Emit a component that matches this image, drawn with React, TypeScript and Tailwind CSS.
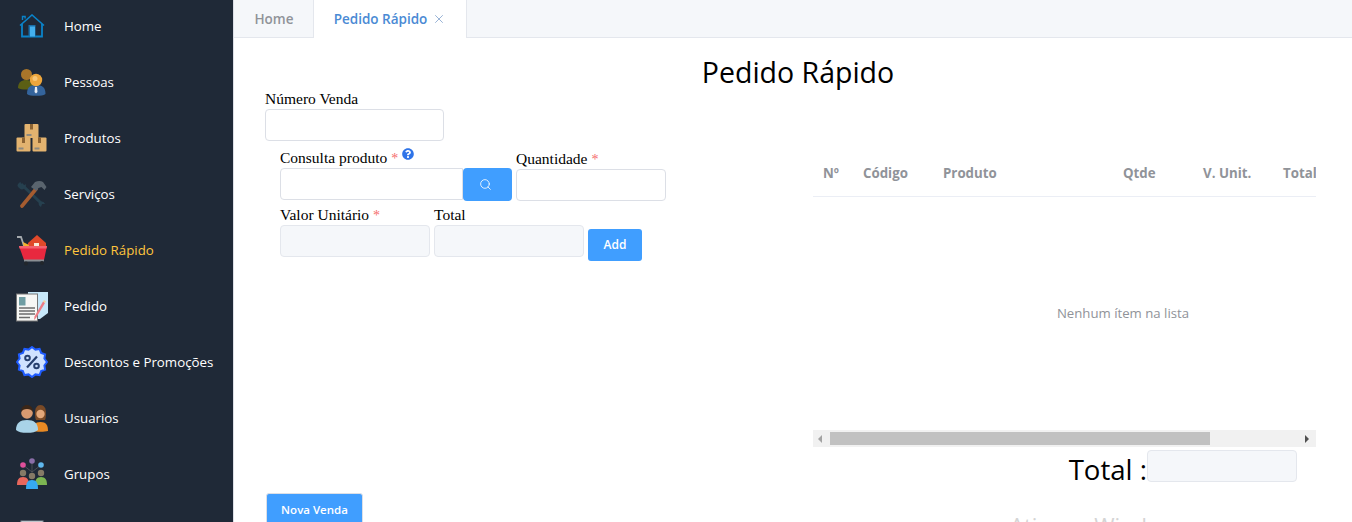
import { Search, X } from "lucide-react";
import { FaQuestionCircle } from "react-icons/fa";
import type { ReactNode } from "react";

function HomeIcon() {
  return (
    <svg width="26" height="24" viewBox="0 0 26 24" fill="none">
      <path d="M1 11.500 13 1l12 10.500" stroke="#0a83c9" strokeWidth="1.600" />
      <path d="M3.500 6V2.500h2.600v2" stroke="#0a83c9" strokeWidth="1.400" />
      <path d="M3 10v12.500h20V10" stroke="#0a83c9" strokeWidth="1.800" />
      <rect x="9.500" y="11" width="7" height="11.500" fill="#1a6fa8" />
      <rect x="11" y="12.500" width="5" height="10" fill="#43b0ee" />
    </svg>
  );
}

function PessoasIcon() {
  return (
    <svg width="28" height="28" viewBox="0 0 28 28">
      <path d="M0 20c0-6 4-8 8-8s8 2 8 8c-2 1-4 1.500-8 1.500S2 21 0 20Z" fill="#5b5f14" />
      <circle cx="8.500" cy="6.500" r="5.500" fill="#a9752a" />
      <path d="M9 26c0-7 3-9 9-9s9.500 2 9.500 9c-2 1.500-5 1.800-9.500 1.800S11 27.500 9 26Z" fill="#34649c" />
      <path d="M17 19h2l.5 5-1.500 1.500-1.500-1.500Z" fill="#e9eef5" />
      <circle cx="18" cy="12" r="6.200" fill="#eda63c" />
      <circle cx="17" cy="10.500" r="2.500" fill="#f7c677" />
    </svg>
  );
}

function BoxIcon({ x, y }: { x: number; y: number }) {
  return (
    <g transform={`translate(${x} ${y})`}>
      <rect width="14" height="14" rx="1" fill="#e3b36f" />
      <rect x="5.500" width="3" height="5.500" fill="#8d6433" />
      <rect x="2" y="10" width="5" height="2" fill="#8e8a80" />
    </g>
  );
}

function ProdutosIcon() {
  return (
    <svg width="32" height="28" viewBox="0 0 32 28">
      <BoxIcon x={8.500} y={0} />
      <BoxIcon x={0.500} y={13.500} />
      <BoxIcon x={16.500} y={13.500} />
    </svg>
  );
}

function ServicosIcon() {
  return (
    <svg width="30" height="28" viewBox="0 0 30 28" fill="none">
      <path d="M4 4 L25 24" stroke="#26404f" strokeWidth="3" />
      <path d="M0.500 6c0-2 1-3 3-4l1 3 2 1 2-2c1 2 0 4-2 5s-4 0-6-3Z" fill="#26404f" />
      <path d="M22 22c2-1 5-1 6 2l-3 0-1 3c-2-1-3-3-2-5Z" fill="#26404f" />
      <path d="M5 26 19 9" stroke="#a55c30" strokeWidth="3.600" strokeLinecap="round" />
      <path d="M14 7l4-5c3-1.500 6-1.500 8 0l3.500 5-2 3-3-3-3 1-2 3Z" fill="#59646e" />
    </svg>
  );
}

function PedidoRapidoIcon() {
  return (
    <svg width="32" height="32" viewBox="0 0 32 32" fill="none">
      <path d="M1 3h4l3 9" stroke="#a4a9ad" strokeWidth="1.800" />
      <path d="M21 1l9 8v6H12V9Z" fill="#e0492a" />
      <path d="M18 9h5v6h-5Z" fill="#f8ead8" />
      <path d="M7 8l6 3-1 4H8Z" fill="#f2b22e" />
      <path d="M3 12h28l-3 14H8Z" fill="#e8283f" />
      <path d="M3 12h28l-.5 2.500H3.500Z" fill="#f4606f" />
      <path d="M8 26.500h20" stroke="#8a8f94" strokeWidth="2" />
      <circle cx="10" cy="29.500" r="2" fill="#22262b" />
      <circle cx="26" cy="29" r="2" fill="#22262b" />
    </svg>
  );
}

function PedidoIcon() {
  return (
    <svg width="32" height="31" viewBox="0 0 32 31">
      <path d="M12 1h20v21l-8 6H12Z" fill="#c7e8fa" />
      <rect x="0.500" y="3" width="21" height="27" fill="#f7f7f5" stroke="#777" />
      <rect x="3" y="6" width="6.500" height="8.500" fill="#6f9da3" />
      <path d="M3 17h16M3 20h16M3 23h16M3 26.500h11" stroke="#6d6d6d" strokeWidth="1.300" />
      <path d="M29 12 20 27l-2 2 .5-3.500L27 10.500Z" fill="#ee7d85" />
      <path d="M27 10.500l2 1.500 1-1.500-2-1.500Z" fill="#f2d39b" />
    </svg>
  );
}

function DescontosIcon() {
  return (
    <svg width="32" height="32" viewBox="0 0 32 32">
      <path
        d="M16 1l3.400 2.600 4.200-.7 1.500 4 4 1.500-.7 4.200L31 16l-2.600 3.400.7 4.200-4 1.500-1.500 4-4.200-.7L16 31l-3.400-2.600-4.200.7-1.500-4-4-1.500.7-4.200L1 16l2.600-3.400-.7-4.200 4-1.500 1.500-4 4.200.7Z"
        fill="#cfe2ff"
        stroke="#1f5cff"
        strokeWidth="2"
      />
      <path d="M21 10.500 11 21.500" stroke="#27406f" strokeWidth="2.200" />
      <circle cx="11.500" cy="12" r="2.300" fill="none" stroke="#27406f" strokeWidth="2" />
      <circle cx="20.500" cy="20" r="2.300" fill="none" stroke="#27406f" strokeWidth="2" />
    </svg>
  );
}

function UsuariosIcon() {
  return (
    <svg width="32" height="29" viewBox="0 0 32 29">
      <path d="M17 27c0-6 2-9 7.500-9s7.500 3 7.500 9c-3 1-12 1-15 0Z" fill="#e98a24" />
      <path d="M19 9c0-5 2-8 5.500-8S30 4 30 9c0 4-.5 6-1 7h-9c-.5-1-1-3-1-7Z" fill="#7a4a26" />
      <circle cx="24.500" cy="10" r="4.200" fill="#e4a87a" />
      <path d="M0 26c0-7 4-10 11-10s11 3 11 10c-2 2-6 2.800-11 2.800S2 28 0 26Z" fill="#a9d3e8" />
      <circle cx="11" cy="9" r="5.800" fill="#d89a70" />
      <path d="M5 8c0-5 3-7 6-7s6 2 6 7c-1.500-2-3-3-6-3S6.500 6 5 8Z" fill="#3a2618" />
    </svg>
  );
}

function GruposIcon() {
  return (
    <svg width="32" height="32" viewBox="0 0 32 32" fill="none">
      <path d="M7 7 16 14M16 4v10M25 7 16 14" stroke="#57585c" strokeWidth="0.800" />
      <circle cx="7" cy="7" r="2.800" fill="#e0509b" />
      <circle cx="16" cy="3" r="2.800" fill="#8a6ea8" />
      <circle cx="25" cy="7" r="2.800" fill="#5fb8ee" />
      <circle cx="7" cy="15" r="3.200" fill="#857a66" />
      <path d="M1 27c0-5 1.500-8 6-8s6 3 6 8Z" fill="#e8675c" />
      <circle cx="25" cy="15" r="3.200" fill="#857a66" />
      <path d="M19 27c0-5 1.500-8 6-8s6 3 6 8Z" fill="#7cb552" />
      <circle cx="16" cy="18" r="3.200" fill="#857a66" />
      <path d="M10 31c0-6 1.500-9 6-9s6 3 6 9Z" fill="#36aaf2" />
    </svg>
  );
}

function RelatorioIcon() {
  return (
    <svg width="24" height="20" viewBox="0 0 24 20" fill="none">
      <rect x="1" y="1" width="22" height="19" fill="#f4f6f8" stroke="#88929c" />
      <path d="M4 5h9M17 7l2 2 3-6" stroke="#3e5a73" strokeWidth="1.500" />
    </svg>
  );
}

const menu: { label: string; icon: ReactNode; active?: boolean }[] = [
  { label: "Home", icon: <HomeIcon /> },
  { label: "Pessoas", icon: <PessoasIcon /> },
  { label: "Produtos", icon: <ProdutosIcon /> },
  { label: "Serviços", icon: <ServicosIcon /> },
  { label: "Pedido Rápido", icon: <PedidoRapidoIcon />, active: true },
  { label: "Pedido", icon: <PedidoIcon /> },
  { label: "Descontos e Promoções", icon: <DescontosIcon /> },
  { label: "Usuarios", icon: <UsuariosIcon /> },
  { label: "Grupos", icon: <GruposIcon /> },
  { label: "", icon: <RelatorioIcon /> },
];

function Sidebar() {
  return (
    <aside className="w-[233px] shrink-0 overflow-hidden bg-[#1f2937] font-['Open_Sans',sans-serif] text-[13.300px]">
      <ul className="-mt-[2px]">
        {menu.map((item, i) => (
          <li key={i} className="flex h-[56px] items-center">
            <span className="flex w-[64px] shrink-0 items-center justify-center">{item.icon}</span>
            <span className={item.active ? "pt-[2px] text-[#ffc53d]" : "pt-[2px] text-white"}>{item.label}</span>
          </li>
        ))}
      </ul>
    </aside>
  );
}

function Tabs() {
  return (
    <div className="flex h-[38px] shrink-0 border-b border-[#e4e7ed] bg-[#f5f7fa] pl-px font-['Open_Sans',sans-serif] text-[13.500px] font-semibold">
      <div className="flex h-[38px] w-[78px] items-center justify-center text-[#909399]">Home</div>
      <div className="flex h-[38px] w-[154px] items-center justify-center gap-[5px] border-x border-[#e4e7ed] bg-white text-[#4a8ad4]">
        Pedido Rápido
        <X size={14} strokeWidth={1.200} className="text-[#6f93c4]" />
      </div>
    </div>
  );
}

function Field({ readOnly, className }: { readOnly?: boolean; className: string }) {
  return (
    <input
      readOnly={readOnly}
      className={`block h-[32px] rounded border ${readOnly ? "border-[#e4e7ed] bg-[#f5f7fa]" : "border-[#dcdfe6] bg-white"} ${className}`}
    />
  );
}

function Label({ text, required }: { text: string; required?: boolean }) {
  return (
    <label className="block h-[16px] whitespace-nowrap text-[15.500px] leading-[14px] text-black">
      {text}
      {required && <span className="ml-[4px] text-[14px] text-[#f56c6c]">*</span>}
    </label>
  );
}

function PedidoForm() {
  return (
    <div className="w-[548px] shrink-0 pl-[31px] font-['Liberation_Serif',serif]">
      <div className="mt-px">
        <Label text="Número Venda" />
        <Field className="mt-px w-[179px]" />
      </div>

      <div className="mt-[10px] flex pl-[15px]">
        <div className="w-[236px]">
          <div className="relative">
            <Label text="Consulta produto" required />
            <FaQuestionCircle size={12} className="absolute left-[122px] top-[-3px] text-[#2f74e8]" />
          </div>
          <div className="mt-px flex">
            <Field className="w-[183px] rounded-r-none" />
            <button className="flex h-[33px] w-[49px] items-center justify-center rounded bg-[#409eff] pr-[5px] text-white">
              <Search size={13} strokeWidth={1.500} />
            </button>
          </div>
        </div>
        <div className="mt-px">
          <Label text="Quantidade" required />
          <Field className="mt-px w-[150px]" />
        </div>
      </div>

      <div className="mt-[7px] flex items-start gap-[4px] pl-[15px]">
        <div>
          <Label text="Valor Unitário" required />
          <Field readOnly className="mt-px w-[150px]" />
        </div>
        <div>
          <Label text="Total" />
          <Field readOnly className="mt-px w-[150px]" />
        </div>
        <button className="mt-[21px] h-[32px] w-[54px] rounded-[3px] bg-[#409eff] font-['Open_Sans',sans-serif] text-[12px] font-semibold text-white">
          Add
        </button>
      </div>

      <button className="ml-px mt-[232px] block h-[34px] w-[97px] rounded-[3px] border border-[#dcdfe6] bg-[#409eff] font-['Open_Sans',sans-serif] text-[11.500px] font-semibold text-white">
        Nova Venda
      </button>
    </div>
  );
}

const columns = [
  { label: "Nº", width: "w-[40px]" },
  { label: "Código", width: "w-[80px]" },
  { label: "Produto", width: "w-[180px]" },
  { label: "Qtde", width: "w-[80px]" },
  { label: "V. Unit.", width: "w-[80px]" },
  { label: "Total", width: "w-[43px]" },
];

function ItensTable() {
  return (
    <div className="w-[503px] shrink-0 overflow-hidden font-['Open_Sans',sans-serif]">
      <div className="mt-[60px] flex h-[46px] items-center border-b border-[#ebeef5] pl-[10px] text-[13.300px] font-bold text-[#909399]">
        {columns.map((c) => (
          <div key={c.label} className={`${c.width} shrink-0 whitespace-nowrap`}>
            {c.label}
          </div>
        ))}
      </div>
      {/* the empty text is centred on the scrolled width, not the visible one */}
      <div className="flex h-[233px] w-[620px] items-center justify-center pt-px text-[13.200px] text-[#909399]">
        Nenhum ítem na lista
      </div>
      <div className="flex h-[17px] items-center bg-[#f1f1f1]">
        <div className="ml-[5px] h-0 w-0 border-y-[4px] border-r-[4px] border-y-transparent border-r-[#a3a3a3]" />
        <div className="ml-[8px] h-[13px] w-[380px] bg-[#c1c1c1]" />
        <div className="ml-auto mr-[7px] h-0 w-0 border-y-[4px] border-l-[4px] border-y-transparent border-l-[#505050]" />
      </div>
      <div className="mt-[3px] flex items-start justify-end pr-[19px]">
        <span className="mt-[3px] text-[27.600px] leading-[32px] text-black">Total :</span>
        <input readOnly className="block h-[32px] w-[150px] rounded border border-[#e4e7ed] bg-[#f5f7fa]" />
      </div>
    </div>
  );
}

export default function App() {
  return (
    <div className="relative flex h-[522px] w-[1352px] overflow-hidden bg-white">
      <Sidebar />
      <main className="flex min-w-0 flex-1 flex-col border-l border-[#dcdfe6]">
        <Tabs />
        <h1 className="mt-[15px] h-[38px] pl-[10px] text-center font-['Open_Sans',sans-serif] text-[28.500px] leading-[38px] text-black">
          Pedido Rápido
        </h1>
        <div className="flex">
          <PedidoForm />
          <div className="w-[31px] shrink-0" />
          <ItensTable />
        </div>
      </main>
      <span className="absolute left-[1010px] top-[510px] font-['Open_Sans',sans-serif] text-[22px] leading-[30px] text-[#d4d4d4]">
        Ativar o Windows
      </span>
    </div>
  );
}
